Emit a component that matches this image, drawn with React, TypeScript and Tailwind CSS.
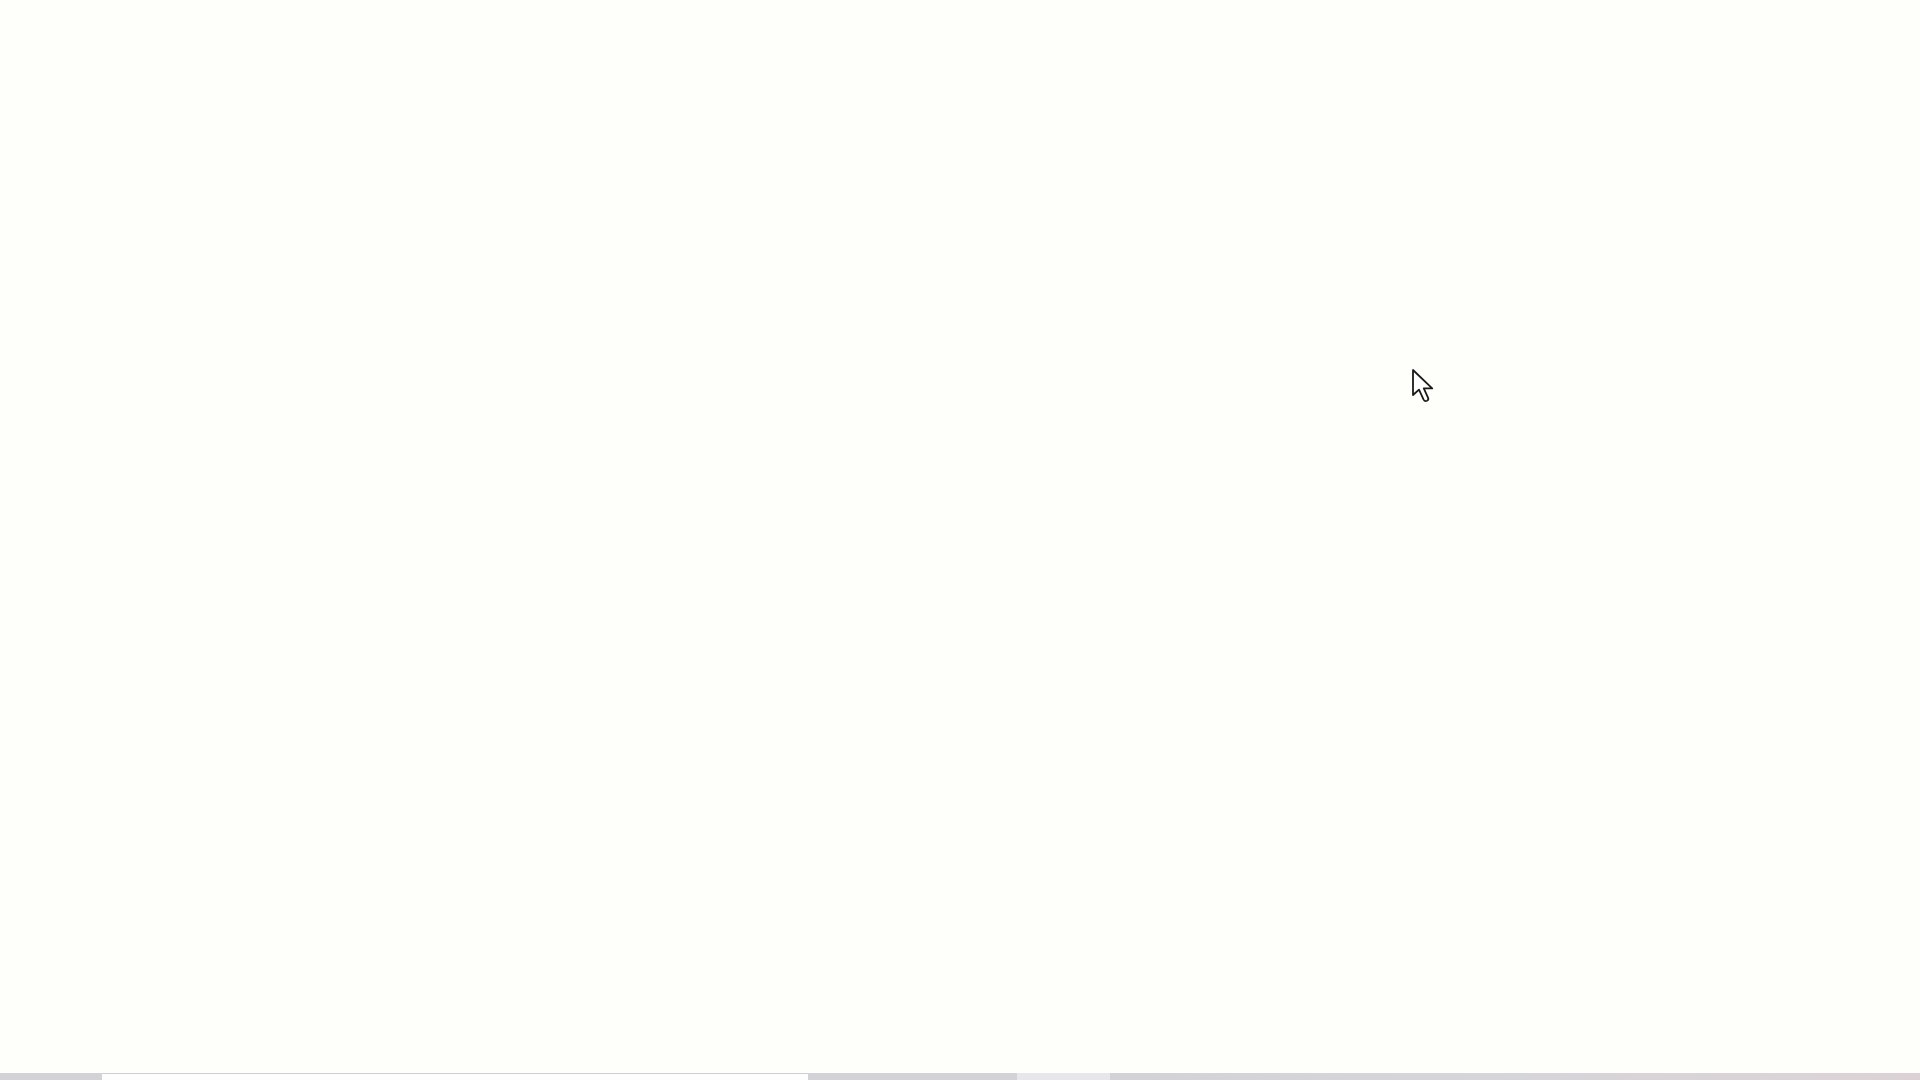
export default function App() {
  return (
    <div className="relative flex h-screen w-full flex-col overflow-hidden bg-[#fefefa]">
      <div className="flex-1" />

      {/* pointer */}
      <svg
        className="absolute left-[1411px] top-[368px]"
        width="24"
        height="36"
        viewBox="0 0 12 18"
        fill="none"
      >
        <path
          d="M1 1 L1 13.5 L4 10.8 L6.3 15.8 Q6.9 16.9 8 16.4 Q9 15.9 8.5 14.8 L6.4 10.2 L10.6 10.2 Z"
          fill="#ffffff"
          stroke="#1a1a1a"
          strokeWidth="0.9"
          strokeLinejoin="round"
        />
      </svg>

      {/* bottom strip */}
      <div className="flex h-[7px] w-full">
        <div className="w-[102px] bg-[#d3d2d7]" />
        <div className="w-[706px] border-t border-[#cfcfd3] bg-[#fdfdfd]" />
        <div className="w-[209px] bg-[#d3d2d7]" />
        <div className="w-[93px] bg-[#e7e6ea]" />
        <div className="flex-1 bg-gradient-to-r from-[#d3d2d7] via-[#d6d5d9] to-[#dcd2d6]" />
      </div>
    </div>
  )
}
